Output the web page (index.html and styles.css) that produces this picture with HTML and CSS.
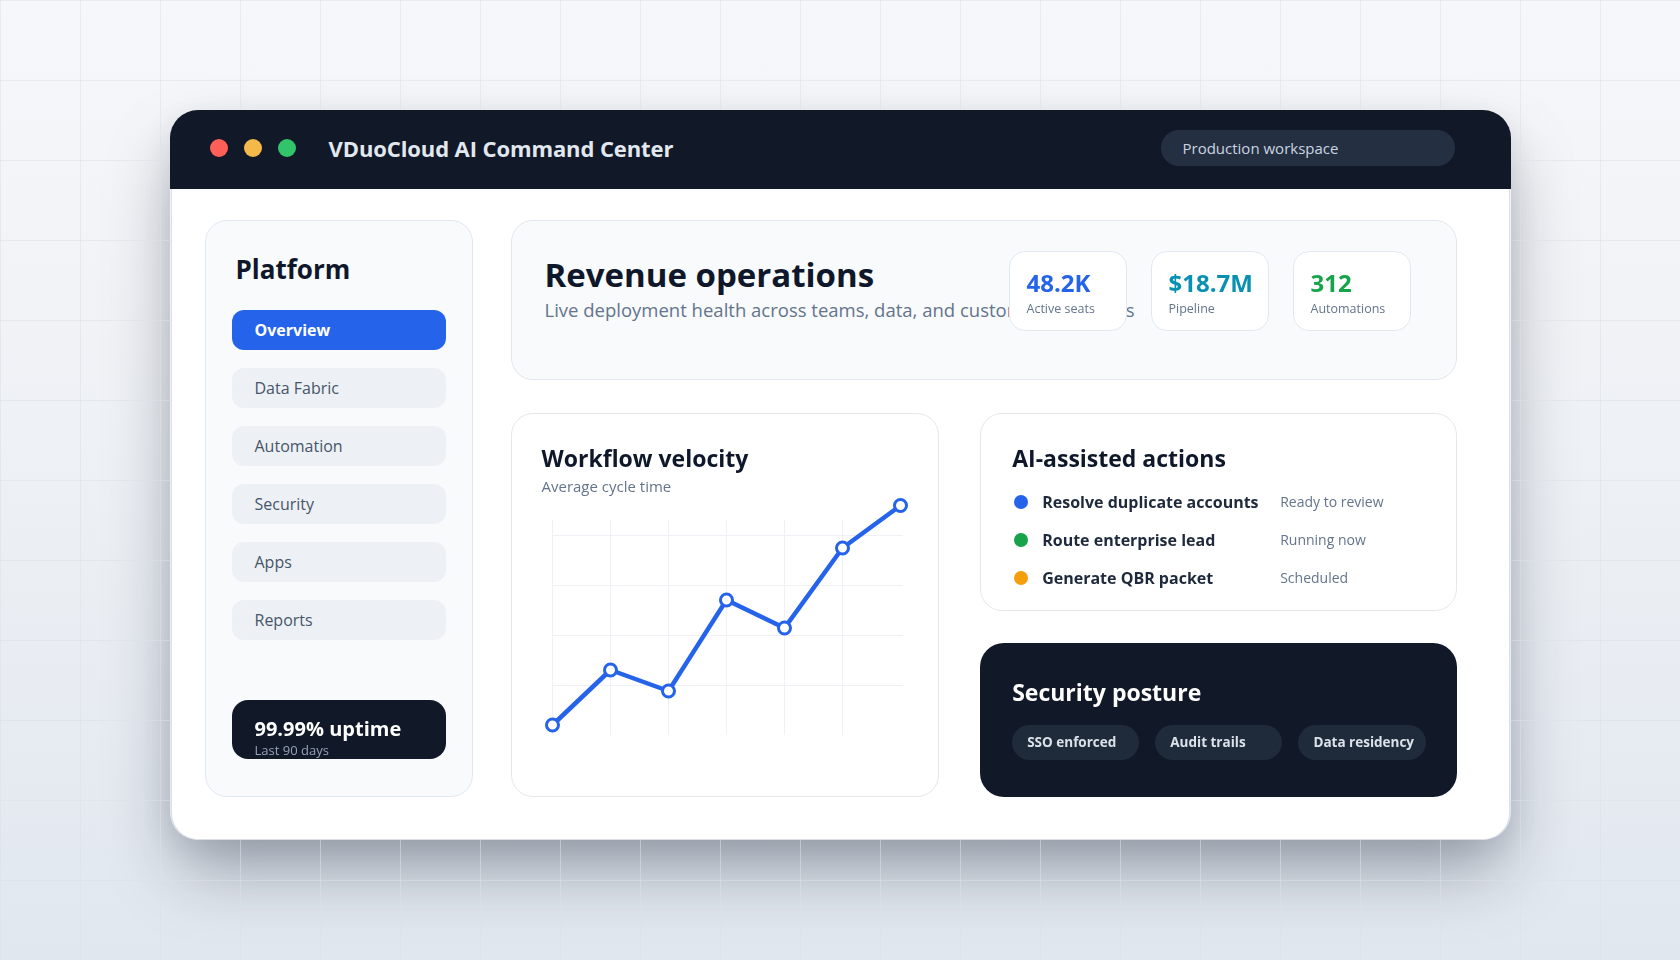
FILE: index.html
```html
<!DOCTYPE html>
<html lang="en">
<head>
<meta charset="utf-8">
<title>VDuoCloud AI Command Center</title>
<link rel="stylesheet" href="styles.css">
</head>
<body>
<div class="stage">
  <div class="window">
    <header class="titlebar">
      <div class="dots">
        <span class="dot dot-red"></span>
        <span class="dot dot-yellow"></span>
        <span class="dot dot-green"></span>
      </div>
      <div class="app-title">VDuoCloud AI Command Center</div>
      <div class="workspace">Production workspace</div>
    </header>
    <div class="content">
      <aside class="sidebar">
        <h2 class="sidebar-title">Platform</h2>
        <nav class="nav">
          <a class="nav-item active">Overview</a>
          <a class="nav-item">Data Fabric</a>
          <a class="nav-item">Automation</a>
          <a class="nav-item">Security</a>
          <a class="nav-item">Apps</a>
          <a class="nav-item">Reports</a>
        </nav>
        <div class="uptime">
          <div class="uptime-value">99.99% uptime</div>
          <div class="uptime-label">Last 90 days</div>
        </div>
      </aside>
      <main class="main">
        <section class="hero">
          <div class="hero-text">
            <h1 class="hero-title">Revenue operations</h1>
            <p class="hero-sub">Live deployment health across teams, data, and customer workflows</p>
          </div>
          <div class="stats">
            <div class="stat"><div class="stat-value blue">48.2K</div><div class="stat-label">Active seats</div></div>
            <div class="stat"><div class="stat-value cyan">$18.7M</div><div class="stat-label">Pipeline</div></div>
            <div class="stat"><div class="stat-value green">312</div><div class="stat-label">Automations</div></div>
          </div>
        </section>
        <div class="row">
          <section class="card velocity">
            <h3 class="card-title">Workflow velocity</h3>
            <div class="card-sub">Average cycle time</div>
            <svg class="chart" width="372" height="246" viewBox="0 0 372 246">
              <g class="grid-lines">
                <line x1="10.5" y1="24" x2="10.5" y2="239"/>
                <line x1="68.5" y1="24" x2="68.5" y2="239"/>
                <line x1="126.5" y1="24" x2="126.5" y2="239"/>
                <line x1="184.5" y1="24" x2="184.5" y2="239"/>
                <line x1="242.5" y1="24" x2="242.5" y2="239"/>
                <line x1="300.5" y1="24" x2="300.5" y2="239"/>
                <line x1="10.5" y1="39.5" x2="361" y2="39.5"/>
                <line x1="10.5" y1="89.5" x2="361" y2="89.5"/>
                <line x1="10.5" y1="139.5" x2="361" y2="139.5"/>
                <line x1="10.5" y1="189.5" x2="361" y2="189.5"/>
              </g>
              <polyline class="trend" points="10.5,229 68.5,174 126.5,195 184.5,104 242.5,132 300.5,52 358.5,9.5"/>
              <g class="points">
                <circle cx="10.5" cy="229" r="6"/>
                <circle cx="68.5" cy="174" r="6"/>
                <circle cx="126.5" cy="195" r="6"/>
                <circle cx="184.5" cy="104" r="6"/>
                <circle cx="242.5" cy="132" r="6"/>
                <circle cx="300.5" cy="52" r="6"/>
                <circle cx="358.5" cy="9.5" r="6"/>
              </g>
            </svg>
          </section>
          <div class="stack">
            <section class="card actions">
              <h3 class="card-title">AI-assisted actions</h3>
              <ul class="action-list">
                <li class="action"><span class="action-dot dot-blue"></span><span class="action-name">Resolve duplicate accounts</span><span class="action-status">Ready to review</span></li>
                <li class="action"><span class="action-dot dot-green2"></span><span class="action-name">Route enterprise lead</span><span class="action-status">Running now</span></li>
                <li class="action"><span class="action-dot dot-amber"></span><span class="action-name">Generate QBR packet</span><span class="action-status">Scheduled</span></li>
              </ul>
            </section>
            <section class="posture">
              <h3 class="posture-title">Security posture</h3>
              <div class="chips">
                <span class="chip">SSO enforced</span>
                <span class="chip">Audit trails</span>
                <span class="chip">Data residency</span>
              </div>
            </section>
          </div>
        </div>
      </main>
    </div>
  </div>
</div>
</body>
</html>
```
FILE: styles.css
```css
* { box-sizing: border-box; }

html, body { height: 100%; }

body {
  margin: 0;
  overflow: hidden;
  font-family: "Open Sans", "Noto Sans", Arial, sans-serif;
  color: #0f172a;
  background: linear-gradient(180deg, #f6f7fa 0%, #eef1f5 45%, #e1e7ef 100%);
  display: flex;
  justify-content: center;
  align-items: flex-start;
  padding-top: 110px;
}

/* faint grid that sits above the window shadow but under the window */
body::before {
  content: "";
  position: fixed;
  inset: 0;
  z-index: 1;
  pointer-events: none;
  background-image:
    linear-gradient(to right, rgba(220, 225, 232, 0.55) 1px, transparent 1px),
    linear-gradient(to bottom, rgba(220, 225, 232, 0.55) 1px, transparent 1px);
  background-size: 80px 80px;
}

.stage {
  position: relative;
  width: 1341px;
  height: 730px;
}

.stage::before {
  content: "";
  position: absolute;
  inset: 0;
  z-index: 0;
  border-radius: 28px;
  box-shadow: 0 36px 70px -8px rgba(15, 23, 42, 0.36), 0 10px 30px rgba(15, 23, 42, 0.08);
}

.window {
  position: relative;
  z-index: 2;
  height: 100%;
  display: flex;
  flex-direction: column;
  border-radius: 28px;
  overflow: hidden;
}

/* ---------- title bar ---------- */
.titlebar {
  height: 79px;
  flex: none;
  background: #111827;
  display: flex;
  align-items: center;
  padding: 0 56px 3px 40px;
}

.dots { display: flex; gap: 16px; }
.dot { width: 18px; height: 18px; border-radius: 50%; display: block; }
.dot-red { background: #ff5f57; }
.dot-yellow { background: #f5b94b; }
.dot-green { background: #32c46a; }

.app-title {
  margin-left: 33px;
  font-size: 22px;
  font-weight: 700;
  color: #e2e8f0;
  letter-spacing: -0.1px;
}

.workspace {
  margin-left: auto;
  width: 294px;
  height: 36px;
  border-radius: 999px;
  background: #242f41;
  color: #cbd5e1;
  font-size: 15px;
  line-height: 36px;
  padding: 0 22px;
}

/* ---------- body ---------- */
.content {
  flex: 1;
  min-height: 0;
  margin: 0 1px;
  background: #ffffff;
  border: 1px solid #dcdfe8;
  border-top: none;
  border-radius: 0 0 27px 27px;
  display: grid;
  grid-template-columns: 268px minmax(0, 1fr);
  column-gap: 38px;
  padding: 31px 52px 42px 33px;
}

/* ---------- sidebar ---------- */
.sidebar {
  background: #f8fafc;
  border: 1px solid #e2e8f0;
  border-radius: 22px;
  padding: 32px 26px 37px;
  display: flex;
  flex-direction: column;
}

.sidebar-title {
  margin: 0 0 25px 4px;
  font-size: 26px;
  line-height: 32px;
  font-weight: 700;
  color: #0f172a;
}

.nav { display: flex; flex-direction: column; gap: 18px; }

.nav-item {
  height: 40px;
  border-radius: 12px;
  background: #edf1f6;
  color: #475569;
  font-size: 16px;
  display: flex;
  align-items: center;
  padding-left: 23px;
}

.nav-item.active {
  background: #2563eb;
  color: #ffffff;
  font-weight: 700;
}

.uptime {
  margin-top: auto;
  height: 59px;
  overflow: hidden;
  border-radius: 16px;
  background: #111827;
  padding: 17px 23px 0;
}

.uptime-value {
  font-size: 20px;
  line-height: 24px;
  font-weight: 700;
  color: #ffffff;
}

.uptime-label {
  margin-top: 1px;
  font-size: 13px;
  line-height: 16px;
  color: #94a3b8;
}

/* ---------- main ---------- */
.main {
  display: grid;
  grid-template-rows: 160px minmax(0, 1fr);
  row-gap: 33px;
  min-width: 0;
}

.hero {
  background: #f8fafc;
  border: 1px solid #e2e8f0;
  border-radius: 22px;
  padding: 30px 45px 0 33px;
  display: flex;
  align-items: flex-start;
  gap: 24px;
  min-width: 0;
}

.hero-text {
  flex: 1;
  min-width: 0;
  white-space: nowrap;
  padding-top: 4px;
}

.hero-title {
  margin: 0;
  font-size: 33px;
  line-height: 40px;
  font-weight: 700;
  color: #0f172a;
}

.hero-sub {
  margin: 3px 0 0;
  font-size: 18.5px;
  line-height: 24px;
  color: #64748b;
}

.stats {
  position: relative;
  z-index: 1;
  flex: none;
  display: flex;
  gap: 24px;
}

.stat {
  width: 118px;
  height: 80px;
  background: #ffffff;
  border: 1px solid #e2e8f0;
  border-radius: 16px;
  padding: 16px 10px 0 17px;
}

.stat-value {
  font-size: 24px;
  line-height: 29px;
  font-weight: 700;
}

.stat-value.blue { color: #2563eb; }
.stat-value.cyan { color: #0891b2; }
.stat-value.green { color: #16a34a; }

.stat-label {
  margin-top: 4px;
  font-size: 12.5px;
  line-height: 16px;
  color: #64748b;
  white-space: nowrap;
}

.row {
  display: grid;
  grid-template-columns: minmax(0, 0.9fr) minmax(0, 1fr);
  column-gap: 41px;
  min-height: 0;
}

.card {
  background: #ffffff;
  border: 1px solid #e5e7eb;
  border-radius: 22px;
}

.card-title {
  margin: 0;
  font-size: 23px;
  line-height: 28px;
  font-weight: 700;
  color: #0f172a;
}

.velocity { padding: 30px 20px 0 30px; }

.card-sub {
  margin-top: 4px;
  font-size: 15px;
  line-height: 20px;
  color: #64748b;
}

.chart { display: block; overflow: visible; }
.grid-lines line { stroke: #eef1f5; stroke-width: 1; }
.trend { fill: none; stroke: #2563eb; stroke-width: 4.5; stroke-linejoin: round; stroke-linecap: round; }
.points circle { fill: #ffffff; stroke: #2563eb; stroke-width: 3; }

.stack {
  display: grid;
  grid-template-rows: 198px minmax(0, 1fr);
  row-gap: 32px;
  min-height: 0;
}

.actions { padding: 30px 20px 0 31px; }

.action-list {
  list-style: none;
  margin: 18px 0 0;
  padding: 0 0 0 2px;
  display: flex;
  flex-direction: column;
  gap: 14px;
}

.action {
  display: grid;
  grid-template-columns: 14px 224px 1fr;
  column-gap: 14px;
  align-items: center;
  height: 24px;
}

.action-dot { width: 14px; height: 14px; border-radius: 50%; display: block; }
.dot-blue { background: #2563eb; }
.dot-green2 { background: #16a34a; }
.dot-amber { background: #f59e0b; }

.action-name {
  font-size: 16px;
  line-height: 24px;
  font-weight: 700;
  color: #1e293b;
  white-space: nowrap;
}

.action-status {
  font-size: 14px;
  line-height: 24px;
  color: #64748b;
  white-space: nowrap;
}

.posture {
  background: #111827;
  border-radius: 24px;
  padding: 35px 31px 0 32px;
  display: flex;
  flex-direction: column;
  gap: 19px;
}

.posture-title {
  margin: 0;
  font-size: 23px;
  line-height: 28px;
  font-weight: 700;
  color: #ffffff;
}

.chips {
  display: grid;
  grid-template-columns: repeat(3, 1fr);
  column-gap: 16px;
}

.chip {
  height: 35px;
  border-radius: 999px;
  background: #1f2a3b;
  color: #dbe2ea;
  font-size: 13.5px;
  font-weight: 700;
  line-height: 35px;
  padding-left: 15px;
  white-space: nowrap;
}
```
